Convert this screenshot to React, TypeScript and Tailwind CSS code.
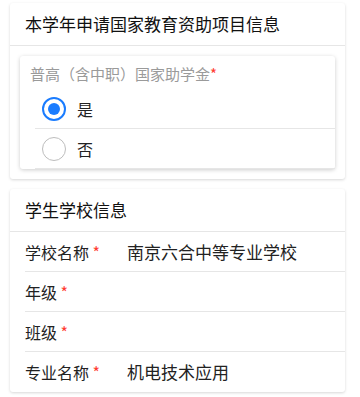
import React from "react";

const font = { fontFamily: '"Noto Sans CJK SC", "Noto Sans", sans-serif' };
const tc = { fontFamily: '"Noto Sans CJK TC", "Noto Sans CJK SC", sans-serif' };

function Radio({ checked, label }: { checked: boolean; label: string }) {
  return (
    <div className="flex h-[40px] items-center border-b border-[#e6e6e6] pl-[7px]">
      {checked ? (
        <span className="flex h-[24px] w-[24px] items-center justify-center rounded-full border-2 border-[#1a7cff]">
          <span className="h-[12px] w-[12px] rounded-full bg-[#1a7cff]" />
        </span>
      ) : (
        <span className="h-[24px] w-[24px] rounded-full border-[1.5px] border-[#bdbdbd]" />
      )}
      <span className="ml-[11px] text-[16px] leading-[20px] text-[#222]">{label}</span>
    </div>
  );
}

function Row({ label, value, last }: { label: string; value?: string; last?: boolean }) {
  return (
    <div className={"ml-[15px] flex h-[40px] items-center " + (last ? "" : "border-b border-[#e6e6e6]")}>
      <div className="w-[102px] shrink-0 text-[16px] leading-[20px] text-[#222]">
        {label} <span className="text-[#ff3b30]">*</span>
      </div>
      {value && <div className="text-[17px] leading-[20px] text-[#222]">{value}</div>}
    </div>
  );
}

export default function App() {
  return (
    <div className="min-h-[397px] bg-white pt-[3px]" style={font}>
      <div className="mx-[10px] w-[335px] rounded-[3px] bg-white shadow-[0_1px_3px_rgba(0,0,0,0.16)]">
        <div className="flex h-[43px] items-center border-b border-[#e6e6e6] pl-[15px] text-[17px] text-[#111]">
          本学年申请国家教育资助项目信息
        </div>
        <div className="p-[10px]">
          <div className="rounded-[3px] bg-white shadow-[0_1px_4px_rgba(0,0,0,0.2)]">
            <div className="pb-[5px] pl-[10px] pt-[8px] text-[15px] leading-[20px] text-[#9a9a9a]">
              普高<span style={tc}>（</span>含中职<span style={tc}>）</span>国家助学金
              <span className="text-[#ff3b30]">*</span>
            </div>
            <div className="ml-[15px]">
              <Radio checked label="是" />
              <Radio checked={false} label="否" />
            </div>
          </div>
        </div>
      </div>
      <div className="mx-[10px] mt-[10px] w-[335px] rounded-[3px] bg-white shadow-[0_1px_3px_rgba(0,0,0,0.16)]">
        <div className="flex h-[43px] items-center border-b border-[#e6e6e6] pl-[15px] text-[17px] text-[#111]">
          学生学校信息
        </div>
        <Row label="学校名称" value="南京六合中等专业学校" />
        <Row label="年级" />
        <Row label="班级" />
        <Row label="专业名称" value="机电技术应用" last />
      </div>
    </div>
  );
}
